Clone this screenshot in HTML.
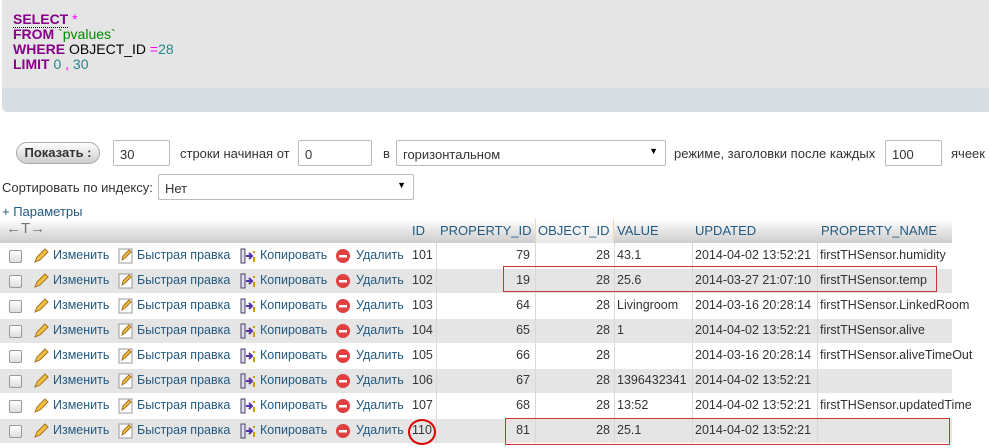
<!DOCTYPE html>
<html><head><meta charset="utf-8"><style>
body{margin:0;width:989px;height:448px;background:#fff;font-family:"Liberation Sans",Arial,sans-serif;font-size:13px;color:#333;position:relative;overflow:hidden}
.a{position:absolute;white-space:nowrap}
.sql{position:absolute;left:2px;top:0;width:987px;height:112px;background:#e5e5e5;border-radius:0 0 0 6px;overflow:hidden}
.sql .bot{position:absolute;left:0;top:88px;width:100%;height:24px;background:#d6dde3}
.sql pre{margin:0;position:absolute;left:11px;top:12px;font-family:"Liberation Sans",Arial,sans-serif;font-size:14px;line-height:15px;color:#000}
.k{color:#808;font-weight:bold}.s{color:#080}.n{color:#288}.o{color:#f0f}
.inp{position:absolute;height:26px;border:1px solid #bbb;border-radius:2px;background:#fff;box-sizing:border-box;padding:6px 0 0 6px;font-size:13px;color:#333}
.btn{position:absolute;left:16px;top:142px;width:84px;height:22px;border:1px solid #aaa;border-radius:12px;background:linear-gradient(#fff,#ccc);box-sizing:border-box;text-align:center;font-weight:bold;font-size:13px;line-height:20px;color:#333}
.hdr{position:absolute;left:0;top:219px;width:952px;height:24px;background:linear-gradient(#fff,#ccc)}
.h{position:absolute;top:223px;color:#235a81;font-size:13px}
.row{position:absolute;left:0;width:952px;height:25px;border-top:1px solid #fff;box-sizing:border-box}
.g{background:#e5e5e5}
.vl{position:absolute;top:243px;width:1px;height:200px;background:#d8d8d8}
.act{color:#235a81}
#rows .a{font-size:12.5px}
.cb{position:absolute;left:9px;width:11px;height:11px;border:1px solid #999;border-radius:2px;background:linear-gradient(#fff,#ddd)}
</style></head><body>
<div class="sql"><div class="bot"></div><pre><span class="k" style="border-bottom:1px dotted #000">SELECT</span> <span class="o">*</span>
<span class="k">FROM</span> <span class="s">`pvalues`</span>
<span class="k">WHERE</span> OBJECT_ID <span class="o">=</span><span class="n">28</span>
<span class="k">LIMIT</span> <span class="n">0</span> <span class="o">,</span> <span class="n">30</span></pre></div>

<div class="btn">Показать :</div>
<div class="inp" style="left:113px;top:140px;width:57px">30</div>
<div class="a" style="left:180px;top:146px">строки начиная от</div>
<div class="inp" style="left:298px;top:140px;width:74px">0</div>
<div class="a" style="left:383px;top:146px">в</div>
<div class="inp" style="left:396px;top:140px;width:270px">горизонтальном<span style="position:absolute;right:7px;top:5px;font-size:9px;color:#000">▼</span></div>
<div class="a" style="left:674px;top:146px">режиме, заголовки после каждых</div>
<div class="inp" style="left:885px;top:140px;width:57px">100</div>
<div class="a" style="left:951px;top:146px">ячеек</div>

<div class="a" style="left:2px;top:180px">Сортировать по индексу:</div>
<div class="inp" style="left:158px;top:174px;width:256px">Нет<span style="position:absolute;right:7px;top:5px;font-size:9px;color:#000">▼</span></div>
<div class="a" style="left:2px;top:204px;color:#235a81">+ Параметры</div>

<div class="hdr"></div>
<div style="position:absolute;left:535px;top:219px;width:79px;height:24px;background:linear-gradient(#fff,#e8e8e8);border-left:1px solid #f0d8b8;border-right:1px solid #f0d8b8;box-sizing:border-box"></div>
<div class="a" style="left:6px;top:220px;font-size:15px;color:#777">←T→</div>
<div class="h" style="left:412px">ID</div>
<div class="h" style="left:440px">PROPERTY_ID</div>
<div class="h" style="left:538px">OBJECT_ID</div>
<div class="h" style="left:617px">VALUE</div>
<div class="h" style="left:695px">UPDATED</div>
<div class="h" style="left:821px">PROPERTY_NAME</div>

<div class="row" style="top:243px"></div>
<div class="row g" style="top:268px"></div>
<div class="row" style="top:293px"></div>
<div class="row g" style="top:318px"></div>
<div class="row" style="top:343px"></div>
<div class="row g" style="top:368px"></div>
<div class="row" style="top:393px"></div>
<div class="row g" style="top:418px"></div>
<div class="vl" style="left:436px"></div><div class="vl" style="left:535px"></div><div class="vl" style="left:614px"></div><div class="vl" style="left:692px"></div><div class="vl" style="left:817px"></div>

<div id="rows"></div>
<script>
var d=[[101,79,"43.1","2014-04-02 13:52:21","firstTHSensor.humidity"],[102,19,"25.6","2014-03-27 21:07:10","firstTHSensor.temp"],[103,64,"Livingroom","2014-03-16 20:28:14","firstTHSensor.LinkedRoom"],[104,65,"1","2014-04-02 13:52:21","firstTHSensor.alive"],[105,66,"","2014-03-16 20:28:14","firstTHSensor.aliveTimeOut"],[106,67,"1396432341","2014-04-02 13:52:21",""],[107,68,"13:52","2014-04-02 13:52:21","firstTHSensor.updatedTime"],[110,81,"25.1","2014-04-02 13:52:21",""]];
var h="";
d.forEach(function(r,i){var y=243+25*i,t=y+5;
h+='<div class="cb" style="top:'+(y+7)+'px"></div>';
h+='<svg class="a" style="left:33px;top:'+(y+5)+'px" width="16" height="16"><path d="M2 14l2-5 8-8 3 3-8 8z" fill="#f0c040" stroke="#a87020"/></svg>';
h+='<div class="a act" style="left:53px;top:'+t+'px">Изменить</div>';
h+='<svg class="a" style="left:118px;top:'+(y+5)+'px" width="16" height="16"><rect x="1" y="1" width="13" height="14" fill="#fff" stroke="#999"/><path d="M4 12l1-4 6-6 2 2-6 6z" fill="#f0c040" stroke="#a87020"/></svg>';
h+='<div class="a act" style="left:137px;top:'+t+'px">Быстрая правка</div>';
h+='<svg class="a" style="left:240px;top:'+(y+5)+'px" width="16" height="16"><rect x="1" y="1" width="4" height="14" fill="#dde" stroke="#446"/><path d="M6 8h5M9 5l3 3-3 3" stroke="#53a" stroke-width="2" fill="none"/><rect x="13" y="3" width="2" height="2" fill="#c90"/><rect x="13" y="9" width="2" height="5" fill="#c90"/></svg>';
h+='<div class="a act" style="left:260px;top:'+t+'px">Копировать</div>';
h+='<svg class="a" style="left:335px;top:'+(y+5)+'px" width="16" height="16"><circle cx="8" cy="8" r="7" fill="#e04040"/><rect x="4" y="7" width="8" height="2.5" fill="#fff"/></svg>';
h+='<div class="a act" style="left:356px;top:'+t+'px">Удалить</div>';
h+='<div class="a" style="left:412px;top:'+t+'px">'+r[0]+'</div>';
h+='<div class="a" style="left:437px;width:93px;text-align:right;top:'+t+'px">'+r[1]+'</div>';
h+='<div class="a" style="left:536px;width:74px;text-align:right;top:'+t+'px">28</div>';
h+='<div class="a" style="left:617px;top:'+t+'px">'+r[2]+'</div>';
h+='<div class="a" style="left:695px;top:'+t+'px">'+r[3]+'</div>';
h+='<div class="a" style="left:820px;top:'+t+'px">'+r[4]+'</div>';
});
document.getElementById("rows").innerHTML=h;
</script>
<div class="a" style="left:503px;top:266px;width:432px;height:24px;border:1px solid #c33"></div>
<div class="a" style="left:505px;top:418px;width:443px;height:25px;border:1px solid #c33"></div>
<div class="a" style="left:408px;top:419px;width:24px;height:22px;border:2px solid #d00;border-radius:50%"></div>
</body></html>
